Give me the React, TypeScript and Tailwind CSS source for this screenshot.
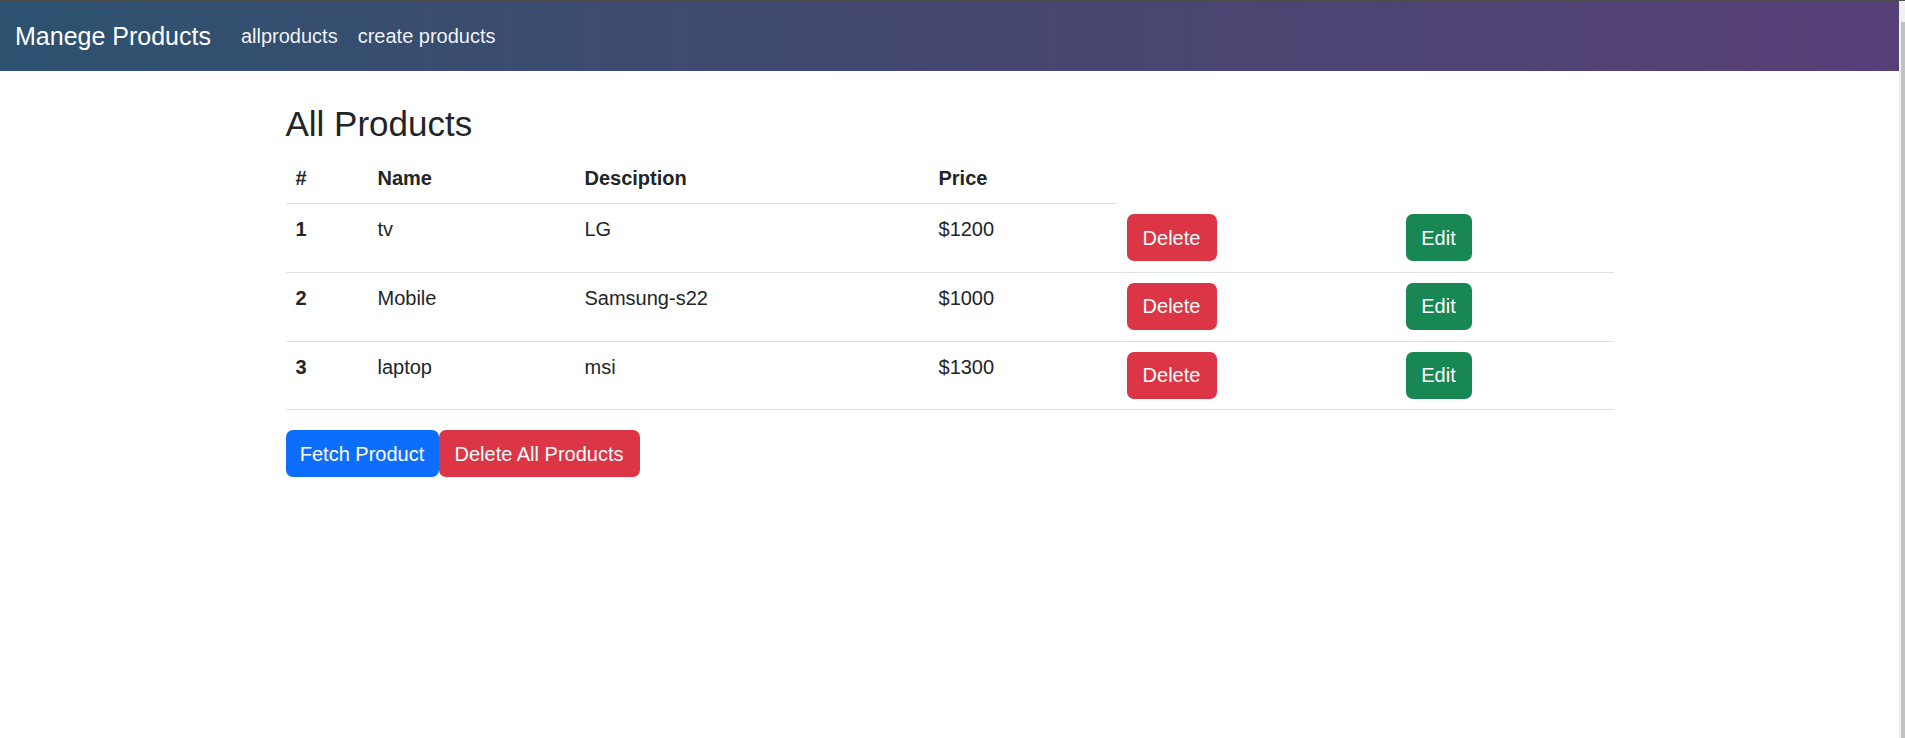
const products = [
  { id: 1, name: "tv", description: "LG", price: 1200 },
  { id: 2, name: "Mobile", description: "Samsung-s22", price: 1000 },
  { id: 3, name: "laptop", description: "msi", price: 1300 },
];

function Navbar() {
  return (
    <nav className="h-[70px] flex items-center px-[15px] bg-gradient-to-r from-[#2c5270] via-[#44476f] to-[#573f77]">
      <a className="text-[25px] leading-[37px] text-white mr-[20px] py-[6px]">
        Manege Products
      </a>
      <ul className="flex items-center">
        <li>
          <a className="block px-[10px] py-[10px] text-[20px] leading-[30px] text-white/95">
            allproducts
          </a>
        </li>
        <li>
          <a className="block px-[10px] py-[10px] text-[20px] leading-[30px] text-white/95">
            create products
          </a>
        </li>
      </ul>
    </nav>
  );
}

function ProductsTable() {
  return (
    <table className="w-full table-fixed border-separate border-spacing-0 mb-[20px] text-[20px] leading-[30px] text-[#212529]">
      <colgroup>
        <col className="w-[82px]" />
        <col className="w-[207px]" />
        <col className="w-[354px]" />
        <col className="w-[188px]" />
        <col className="w-[279px]" />
        <col className="w-[218px]" />
      </colgroup>
      <thead>
        <tr>
          <th className="text-left font-bold p-[10px] border-b border-[#dee2e6]">#</th>
          <th className="text-left font-bold p-[10px] border-b border-[#dee2e6]">Name</th>
          <th className="text-left font-bold p-[10px] border-b border-[#dee2e6]">Desciption</th>
          <th className="text-left font-bold p-[10px] border-b border-[#dee2e6]">Price</th>
        </tr>
      </thead>
      <tbody>
        {products.map((p) => (
          <tr key={p.id}>
            <th className="text-left font-bold align-top px-[10px] pt-[10px] pb-[10.75px] border-b border-[#dee2e6]">
              {p.id}
            </th>
            <td className="align-top px-[10px] pt-[10px] pb-[10.75px] border-b border-[#dee2e6]">{p.name}</td>
            <td className="align-top px-[10px] pt-[10px] pb-[10.75px] border-b border-[#dee2e6]">{p.description}</td>
            <td className="align-top px-[10px] pt-[10px] pb-[10.75px] border-b border-[#dee2e6]">${p.price}</td>
            <td className="align-top px-[10px] pt-[10px] pb-[10.75px] border-b border-[#dee2e6]">
              <button className="w-[90px] h-[47px] rounded-[7px] bg-[#dc3545] text-white text-[20px] leading-[30px]">
                Delete
              </button>
            </td>
            <td className="align-top px-[10px] pt-[10px] pb-[10.75px] border-b border-[#dee2e6]">
              <button className="w-[66px] h-[47px] rounded-[7px] bg-[#198754] text-white text-[20px] leading-[30px]">
                Edit
              </button>
            </td>
          </tr>
        ))}
      </tbody>
    </table>
  );
}

export default function App() {
  return (
    <div className="h-screen overflow-hidden flex flex-col bg-white font-['Liberation_Sans',Arial,sans-serif]">
      <div className="h-[1px] bg-[#4d4d4d] shrink-0" />
      <div className="flex flex-1 min-h-0">
        <div className="flex-1 min-w-0">
          <Navbar />
          <div className="w-[1328px] mx-auto pt-[32px]">
            <h3 className="text-[35px] leading-[42px] font-medium text-[#212529] mb-[8px]">
              All Products
            </h3>
            <ProductsTable />
            <div className="flex">
              <button className="w-[153px] h-[47px] rounded-[7px] bg-[#0d6efd] text-white text-[20px] leading-[30px]">
                Fetch Product
              </button>
              <button className="w-[201px] h-[47px] rounded-[7px] bg-[#dc3545] text-white text-[20px] leading-[30px]">
                Delete All Products
              </button>
            </div>
          </div>
        </div>
        <div className="w-[6px] shrink-0 bg-[#f1f1f1] flex flex-col">
          <div className="h-[21px]" />
          <div className="flex-1 ml-[2px] bg-[#c1c1c1]" />
        </div>
      </div>
    </div>
  );
}
